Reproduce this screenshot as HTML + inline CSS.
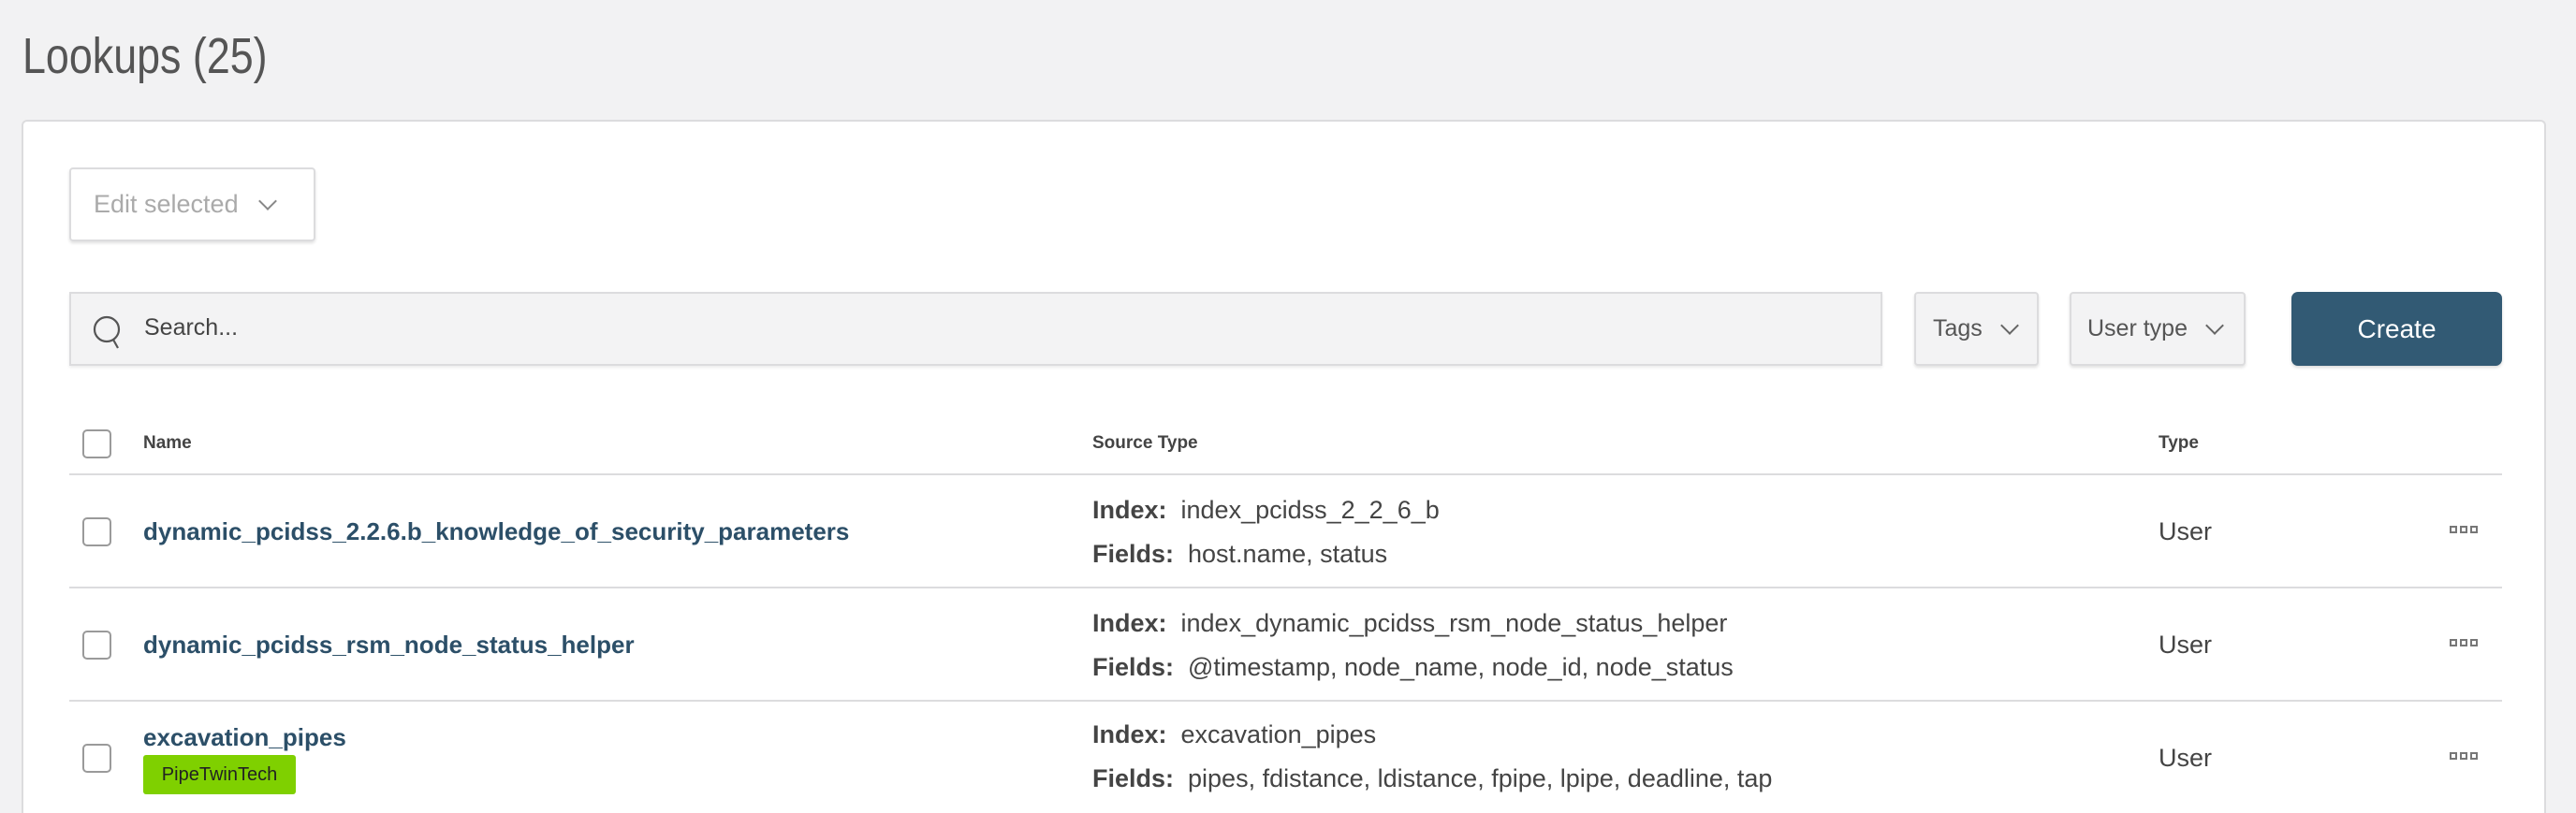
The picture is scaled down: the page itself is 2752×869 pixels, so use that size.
<!DOCTYPE html>
<html><head><meta charset="utf-8"><style>
*{box-sizing:border-box;margin:0;padding:0}
html,body{width:2752px;height:869px;overflow:hidden}
body{background:#f2f2f3;font-family:"Liberation Sans",sans-serif;color:#444;position:relative}
.abs{position:absolute}
.title{left:24px;top:28px;font-size:54px;color:#555;line-height:64px;transform:scaleX(0.83);transform-origin:0 0}
.card{left:23px;top:128px;width:2697px;height:745px;background:#fff;border:2px solid #dcdcde;border-bottom:none;border-radius:6px 6px 0 0}
.btn{border:2px solid #dcdcde;border-radius:4px;box-shadow:0 2px 3px rgba(0,0,0,.12);display:flex;align-items:center}
.chev{display:inline-block;width:14px;height:14px;border-right:2px solid #666;border-bottom:2px solid #666;transform:rotate(45deg);margin-top:-8px}
.cb{width:31px;height:31px;border:2px solid #9a9a9a;border-radius:5px;background:#fff}
.hd{font-weight:bold;font-size:19px;color:#444}
.name{font-weight:bold;font-size:26px;color:#2c4f68}
.src{font-size:27px;color:#444;white-space:nowrap}
.src b{color:#444}
.user{font-size:27px;color:#444}
.line{left:74px;width:2599px;height:2px;background:#dcdcde}
.dots{display:flex;gap:3px}
.dots i{width:8px;height:8px;border:2px solid #777;display:block}
</style></head><body>
<div class="abs title">Lookups (25)</div>
<div class="abs card"></div>
<div class="abs btn" style="left:74px;top:179px;width:263px;height:79px;padding-left:24px;font-size:27px;color:#aaa">Edit selected<span class="chev" style="margin-left:24px;border-color:#888"></span></div>
<div class="abs" style="left:74px;top:312px;width:1937px;height:79px;background:#f3f3f4;border:2px solid #dcdcde;box-shadow:0 2px 3px rgba(0,0,0,.08)">
<svg class="abs" style="left:22px;top:22px" width="40" height="38" viewBox="0 0 40 38"><circle cx="16" cy="16" r="13" fill="none" stroke="#555" stroke-width="2.2"/><path d="M23 27 L28 36" stroke="#555" stroke-width="2.2"/></svg>
<span class="abs" style="left:78px;top:22px;font-size:25px;color:#444">Search...</span></div>
<div class="abs btn" style="left:2045px;top:312px;width:133px;height:79px;background:#f3f3f4;padding-left:18px;font-size:25px;color:#555">Tags<span class="chev" style="margin-left:22px"></span></div>
<div class="abs btn" style="left:2211px;top:312px;width:188px;height:79px;background:#f3f3f4;padding-left:17px;font-size:25px;color:#555">User type<span class="chev" style="margin-left:22px"></span></div>
<div class="abs" style="left:2448px;top:312px;width:225px;height:79px;background:#325a74;border-radius:7px;color:#fff;font-size:28px;display:flex;align-items:center;justify-content:center;box-shadow:0 2px 3px rgba(0,0,0,.15)">Create</div>

<div class="abs cb" style="left:88px;top:459px"></div>
<div class="abs hd" style="left:153px;top:463px">Name</div>
<div class="abs hd" style="left:1167px;top:463px">Source Type</div>
<div class="abs hd" style="left:2306px;top:463px">Type</div>
<div class="abs line" style="top:506px"></div>

<div class="abs cb" style="left:88px;top:553px"></div>
<div class="abs name" style="left:153px;top:553px">dynamic_pcidss_2.2.6.b_knowledge_of_security_parameters</div>
<div class="abs src" style="left:1167px;top:530px"><b>Index:</b>&nbsp; index_pcidss_2_2_6_b</div>
<div class="abs src" style="left:1167px;top:577px"><b>Fields:</b>&nbsp; host.name, status</div>
<div class="abs user" style="left:2306px;top:553px">User</div>
<div class="abs dots" style="left:2617px;top:562px"><i></i><i></i><i></i></div>
<div class="abs line" style="top:627px"></div>

<div class="abs cb" style="left:88px;top:674px"></div>
<div class="abs name" style="left:153px;top:674px">dynamic_pcidss_rsm_node_status_helper</div>
<div class="abs src" style="left:1167px;top:651px"><b>Index:</b>&nbsp; index_dynamic_pcidss_rsm_node_status_helper</div>
<div class="abs src" style="left:1167px;top:698px"><b>Fields:</b>&nbsp; @timestamp, node_name, node_id, node_status</div>
<div class="abs user" style="left:2306px;top:674px">User</div>
<div class="abs dots" style="left:2617px;top:683px"><i></i><i></i><i></i></div>
<div class="abs line" style="top:748px"></div>

<div class="abs cb" style="left:88px;top:795px"></div>
<div class="abs name" style="left:153px;top:773px">excavation_pipes</div>
<div class="abs" style="left:153px;top:807px;width:163px;height:42px;background:#7fd000;border-radius:3px;font-size:20px;color:#222;display:flex;align-items:center;justify-content:center">PipeTwinTech</div>
<div class="abs src" style="left:1167px;top:770px"><b>Index:</b>&nbsp; excavation_pipes</div>
<div class="abs src" style="left:1167px;top:817px"><b>Fields:</b>&nbsp; pipes, fdistance, ldistance, fpipe, lpipe, deadline, tap</div>
<div class="abs user" style="left:2306px;top:795px">User</div>
<div class="abs dots" style="left:2617px;top:804px"><i></i><i></i><i></i></div>
</body></html>
